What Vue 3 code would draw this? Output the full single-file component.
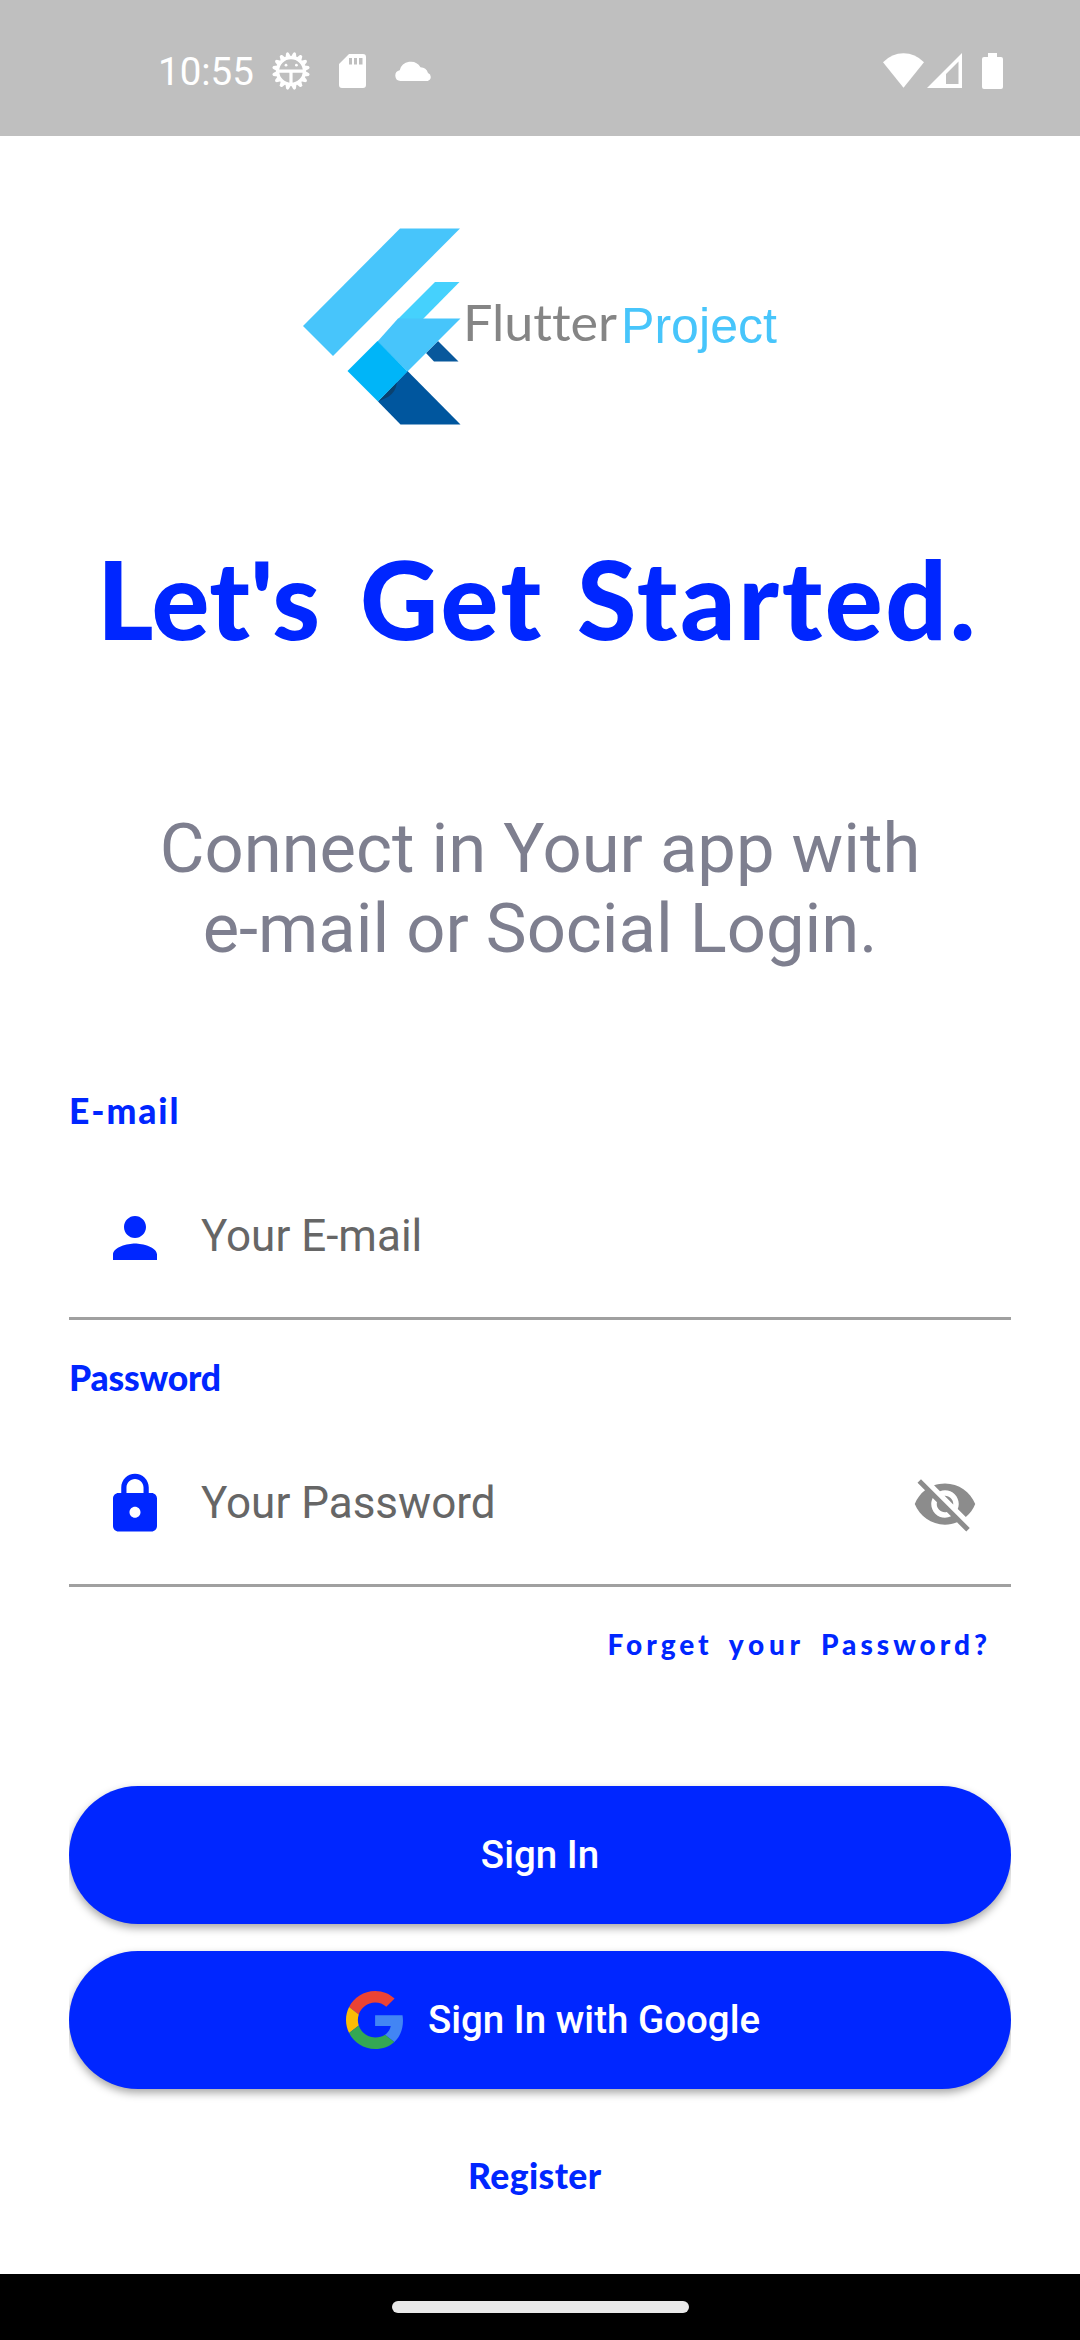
<script setup>
import { ref } from 'vue'

const email = ref('')
const password = ref('')

// Teeth of the debug-gear notification icon
const teeth = Array.from({ length: 16 }, (_, i) => i * 22.5)
</script>

<template>
  <div class="screen">
    <header class="status">
      <span class="time">10:55</span>
      <svg class="gear" width="40" height="40" viewBox="0 0 40 40">
        <g fill="#fff">
          <path v-for="a in teeth" :key="a" d="M16.8 7 L18.6 1.8 Q20 .2 21.4 1.8 L23.2 7 Z" :transform="`rotate(${a + 11.25} 20 20)`" />
        </g>
        <circle cx="20" cy="20" r="13.4" fill="none" stroke="#fff" stroke-width="3.2" />
        <path d="M7 20.2H33M20 20.2V33" stroke="#fff" stroke-width="3.2" fill="none" />
        <circle cx="15" cy="14.2" r="1.4" fill="#fff" />
        <circle cx="25.4" cy="14.2" r="1.4" fill="#fff" />
      </svg>
      <svg class="sd" width="27" height="34" viewBox="0 0 27 34">
        <path fill="#fff" fill-rule="evenodd" d="M10 0H24a3 3 0 0 1 3 3V31a3 3 0 0 1-3 3H3a3 3 0 0 1-3-3V10ZM10 4V10.500H13V4ZM15 4V10.500H18V4ZM20 4V10.500H23.500V4Z" />
      </svg>
      <svg class="cloud" width="38" height="21" viewBox="0 0 38 21">
        <path fill="#fff" d="M5.500 21a5.400 5.400 0 0 1-.8-10.700A11.400 11.400 0 0 1 25.500 7.200A8.200 8.200 0 0 1 33 13a4.200 4.200 0 0 1-.3 8Z" />
      </svg>
      <span class="spacer"></span>
      <svg class="wifi" width="41" height="35" viewBox="0 0 41 35">
        <path fill="#fff" d="M0 9.200Q9 .3 20.500 .3T41 9.200L20.500 34.800Z" />
      </svg>
      <svg class="signal" width="35" height="35" viewBox="0 0 35 35">
        <path fill="#fff" fill-rule="evenodd" d="M35 0V35H0ZM31.500 8.500L19 21V31H31.500Z" />
      </svg>
      <svg class="battery" width="21" height="36" viewBox="0 0 21 36">
        <path fill="#fff" d="M6 0H15V4H19a2 2 0 0 1 2 2V34a2 2 0 0 1-2 2H2a2 2 0 0 1-2-2V6a2 2 0 0 1 2-2H6Z" />
      </svg>
    </header>

    <main class="content">
      <svg class="logo" width="500" height="230" viewBox="0 0 500 230">
        <path fill="#47c5fb" d="M110 18.500H170L43 146L13 116Z" />
        <path fill="#45d1fd" d="M145 72H169.500L133 109H108Z" />
        <path fill="#08589c" d="M148 131L168.500 151.500H144L136 143Z" />
        <path fill="#47c5fb" d="M108 108.500H170.500L117.500 161.500L87.500 131.500Z" />
        <path fill="#00569e" d="M117.500 161L170.500 214.500H110.500L88 191.500Z" />
        <path fill="#0a416f" d="M88 191.500L107 172Q106 182 98 187Z" />
        <path fill="#00b5f8" d="M87.500 131L117.500 161.500L88 191.500L57.500 161Z" />
        <text class="logo-flutter" x="173" y="130.500" textLength="154" lengthAdjust="spacingAndGlyphs">Flutter</text>
        <text class="logo-project" x="331" y="132.500" textLength="156" lengthAdjust="spacingAndGlyphs">Project</text>
      </svg>

      <h1 class="title"><span class="w1">Let's</span><span class="w2">Get</span><span class="w3">Started.</span></h1>

      <p class="subtitle">Connect in Your app with<br />e-mail or Social Login.</p>

      <label class="label label-email" for="email">E-mail</label>
      <div class="field">
        <svg width="66" height="66" viewBox="0 0 24 24" fill="#0026ff">
          <path d="M12 12c2.210 0 4-1.790 4-4s-1.790-4-4-4-4 1.790-4 4 1.790 4 4 4zm0 2c-2.670 0-8 1.340-8 4v2h16v-2c0-2.660-5.330-4-8-4z" />
        </svg>
        <input id="email" v-model="email" type="text" placeholder="Your E-mail" />
      </div>

      <label class="label label-password" for="password">Password</label>
      <div class="field field-password">
        <svg width="66" height="66" viewBox="0 0 24 24" fill="#0026ff">
          <path d="M18 8h-1V6c0-2.760-2.240-5-5-5S7 3.240 7 6v2H6c-1.100 0-2 .9-2 2v10c0 1.100.9 2 2 2h12c1.100 0 2-.9 2-2V10c0-1.100-.9-2-2-2zm-6 9c-1.100 0-2-.9-2-2s.9-2 2-2 2 .9 2 2-.9 2-2 2zm3.100-9H8.900V6c0-1.710 1.390-3.100 3.100-3.100 1.710 0 3.100 1.390 3.100 3.100v2z" />
        </svg>
        <input id="password" v-model="password" type="password" placeholder="Your Password" />
        <svg width="66" height="66" viewBox="0 0 24 24" fill="#8c8c8c">
          <path d="M12 7c2.760 0 5 2.240 5 5 0 .65-.13 1.260-.36 1.830l2.920 2.920c1.510-1.260 2.700-2.890 3.430-4.750-1.730-4.390-6-7.500-11-7.500-1.400 0-2.740.25-3.980.7l2.160 2.160C10.740 7.130 11.350 7 12 7zM2 4.270l2.280 2.280.46.46C3.080 8.300 1.780 10.020 1 12c1.730 4.390 6 7.500 11 7.500 1.550 0 3.030-.3 4.380-.84l.42.42L19.730 22 21 20.730 3.270 3 2 4.270zM7.530 9.800l1.550 1.550c-.05.21-.08.43-.08.65 0 1.660 1.340 3 3 3 .22 0 .44-.03.65-.08l1.550 1.550c-.67.33-1.410.53-2.200.53-2.760 0-5-2.240-5-5 0-.79.2-1.530.53-2.200zm4.310-.78l3.150 3.150.02-.16c0-1.660-1.340-3-3-3l-.17.01z" />
        </svg>
      </div>

      <a class="forgot"><span>Forget</span><span class="your">your</span><span>Password?</span></a>

      <div class="actions">
        <button class="btn" type="button">Sign In</button>
        <button class="btn btn-google" type="button">
          <svg class="google" width="57" height="58" viewBox="0 0 47 48" preserveAspectRatio="none">
            <path fill="#EA4335" d="M24 9.500c3.540 0 6.710 1.220 9.210 3.600l6.850-6.850C35.900 2.380 30.470 0 24 0 14.620 0 6.510 5.380 2.560 13.220l7.980 6.190C12.430 13.720 17.740 9.500 24 9.500z" />
            <path fill="#4285F4" d="M46.980 24.550c0-1.570-.15-3.090-.38-4.550H24v9.020h12.940c-.58 2.960-2.260 5.480-4.780 7.180l7.730 6c4.510-4.180 7.090-10.360 7.090-17.650z" />
            <path fill="#FBBC05" d="M10.530 28.590c-.48-1.450-.76-2.990-.76-4.590s.27-3.140.76-4.590l-7.980-6.190C.92 16.460 0 20.120 0 24c0 3.880.92 7.540 2.560 10.780l7.970-6.190z" />
            <path fill="#34A853" d="M24 48c6.480 0 11.930-2.130 15.890-5.810l-7.730-6c-2.150 1.450-4.920 2.300-8.160 2.300-6.260 0-11.570-4.220-13.470-9.910l-7.980 6.190C6.510 42.620 14.620 48 24 48z" />
          </svg>
          <span>Sign In with Google</span>
        </button>
      </div>

      <a class="register">Register</a>
    </main>

    <footer class="nav"><span class="pill"></span></footer>
  </div>
</template>

<style>
body {
  margin: 0;
}
</style>

<style scoped>
.screen {
  display: flex;
  flex-direction: column;
  width: 1080px;
  height: 2340px;
  overflow: hidden;
  background: #fff;
  font-family: Roboto, sans-serif;
}

.status {
  display: flex;
  align-items: flex-start;
  box-sizing: border-box;
  height: 136px;
  flex: none;
  padding: 0 77px 0 158px;
  background: #bfbfbf;
  color: #fff;
}
.time {
  width: 113px;
  margin-top: 49px;
  font-size: 38.5px;
  line-height: 46px;
}
.gear { margin-top: 51px; }
.sd { margin: 54px 0 0 28px; }
.cloud { margin: 60px 0 0 28.5px; }
.spacer { flex: 1; }
.wifi { margin-top: 53px; }
.signal { margin: 53px 0 0 3px; }
.battery { margin: 53px 0 0 20px; }

.content {
  display: flex;
  flex: 1;
  flex-direction: column;
  padding: 0 69px;
}

.logo {
  align-self: center;
  flex: none;
  margin-top: 74px;
}
.logo-flutter {
  fill: #858585;
  font: 400 51px Lato, sans-serif;
  font-variant-ligatures: none;
}
.logo-project {
  fill: #47c5fb;
  font: 400 50px "Liberation Sans", sans-serif;
}

.title,
.label,
.forgot,
.register {
  color: #0026ff;
  font-family: Lato, sans-serif;
  font-weight: 900;
}
.title {
  display: flex;
  margin: 93px 0 0 28px;
  font-size: 108px;
  line-height: 130px;
  white-space: nowrap;
}
.w1 { width: 263px; letter-spacing: 0.4px; }
.w2 { width: 217px; letter-spacing: 2.8px; }
.w3 { letter-spacing: 2.7px; }

.subtitle {
  margin: 146px 0 0;
  color: #7e7f8f;
  font-size: 68.75px;
  line-height: 80.3px;
  text-align: center;
}

.label {
  font-size: 35.5px;
  line-height: 44px;
}
.label-email {
  margin-top: 119px;
  letter-spacing: 1.9px;
}
.label-password {
  margin-top: 36px;
  letter-spacing: -0.2px;
}

.field {
  display: flex;
  box-sizing: border-box;
  height: 187px;
  flex: none;
  padding: 72px 33px 46px;
  border-bottom: 3px solid #a0a0a0;
}
.field-password {
  padding-top: 71px;
  padding-bottom: 47px;
}
.field svg { flex: none; }
.field input {
  flex: 1;
  box-sizing: border-box;
  width: 0;
  height: 66px;
  padding: 0 0 4px;
  margin: 0 0 0 33px;
  border: 0;
  outline: 0;
  background: none;
  color: #222;
  font: 400 44px Roboto, sans-serif;
}
.field-password input {
  padding-bottom: 2px;
}
.field input::placeholder {
  color: #666;
  opacity: 1;
}

.forgot {
  display: flex;
  justify-content: flex-end;
  gap: 16px;
  margin: 40px 20px 0 0;
  font-size: 28px;
  line-height: 34px;
  letter-spacing: 4px;
}
.your { letter-spacing: 4.8px; }

.actions {
  display: flex;
  flex-direction: column;
  gap: 27px;
  margin-top: 125px;
  overflow-x: clip;
}
.btn {
  display: flex;
  align-items: center;
  justify-content: center;
  height: 138px;
  padding: 0;
  border: 0;
  border-radius: 69px;
  background: #0026ff;
  box-shadow: 0 4px 8px rgba(0, 0, 0, 0.35);
  color: #fff;
  font: 500 38.5px/46px Roboto, sans-serif;
}
.btn-google { padding-left: 26px; }
.google { margin-right: 25px; }

.register {
  margin: 65px 0 0 399px;
  font-size: 35.5px;
  line-height: 44px;
  letter-spacing: 0.4px;
}

.nav {
  display: flex;
  height: 66px;
  flex: none;
  justify-content: center;
  background: #000;
}
.pill {
  width: 297px;
  height: 12px;
  margin-top: 27px;
  border-radius: 6px;
  background: #e9e9e9;
}
</style>
